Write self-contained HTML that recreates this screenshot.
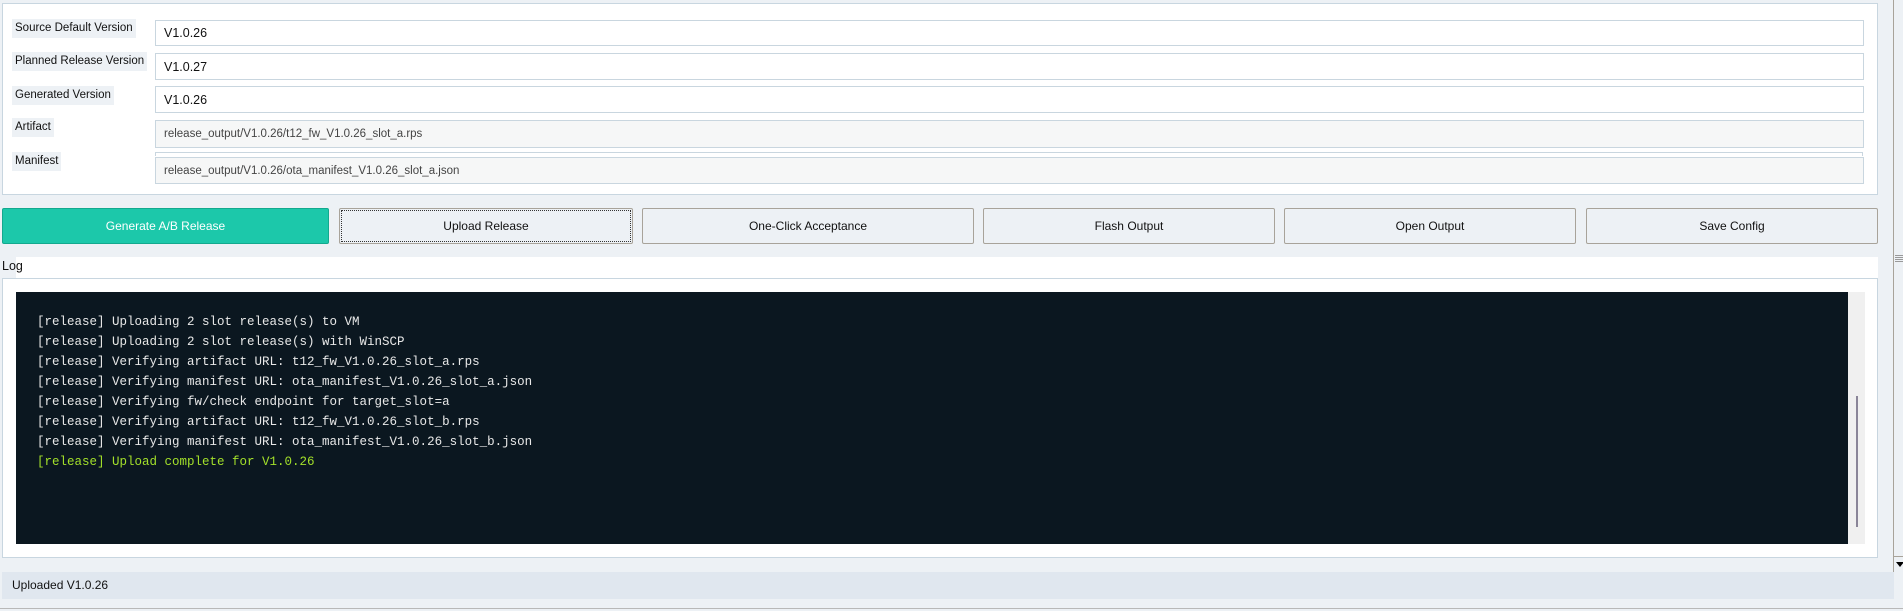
<!DOCTYPE html>
<html><head><meta charset="utf-8"><style>
*{margin:0;padding:0;box-sizing:border-box}
body{width:1903px;height:611px;background:#edf1f5;font-family:"Liberation Sans",sans-serif;position:relative;overflow:hidden;font-size:12px;color:#111}
.a{position:absolute}
.lbl{position:absolute;left:12px;height:19px;line-height:19px;background:#edf1f5;padding:0 3px;font-size:11.5px}
.inp{position:absolute;left:155px;width:1709px;background:#fff;border:1px solid #c9d6df;padding-left:8px;font-size:12.5px}
.ro{background:#f6f7f7;color:#444;font-size:11.5px}
.btn{position:absolute;top:208px;height:36px;background:#edf1f5;border:1px solid #a8a39a;text-align:center;line-height:34px;font-size:12px;border-radius:2px}
.log{font-family:"Liberation Mono",monospace;font-size:12.5px;color:#e8e8e8;position:absolute;left:37px;line-height:20px;white-space:pre}
</style></head><body>
<div class="a" style="left:2px;top:3px;width:1876px;height:192px;background:#fff;border:1px solid #c8d6e0"></div>
<div class="lbl" style="top:19px">Source Default Version</div>
<div class="lbl" style="top:52px">Planned Release Version</div>
<div class="lbl" style="top:86px">Generated Version</div>
<div class="lbl" style="top:118px">Artifact</div>
<div class="lbl" style="top:152px">Manifest</div>
<div class="inp" style="top:20px;height:26px;line-height:24px">V1.0.26</div>
<div class="inp" style="top:53px;height:27px;line-height:27px">V1.0.27</div>
<div class="inp" style="top:86px;height:27px;line-height:27px">V1.0.26</div>
<div class="inp ro" style="top:120px;height:28px;line-height:26px">release_output/V1.0.26/t12_fw_V1.0.26_slot_a.rps</div>
<div class="a" style="left:155px;top:152px;width:1708px;height:4px;border:1px solid #c9d6df;border-bottom:none"></div>
<div class="inp ro" style="top:157px;height:27px;line-height:26px">release_output/V1.0.26/ota_manifest_V1.0.26_slot_a.json</div>
<div class="btn" style="left:2px;width:327px;background:#1cc8aa;border-color:#13a98e;color:#fff">Generate A/B Release</div>
<div class="btn" style="left:339px;width:294px;outline:1px dotted #333;outline-offset:-3px">Upload Release</div>
<div class="btn" style="left:642px;width:332px">One-Click Acceptance</div>
<div class="btn" style="left:983px;width:292px">Flash Output</div>
<div class="btn" style="left:1284px;width:292px">Open Output</div>
<div class="btn" style="left:1586px;width:292px">Save Config</div>
<div class="a" style="left:16px;top:257px;width:1862px;height:21px;background:#fff"></div>
<div class="a" style="left:2px;top:259px;font-size:12.5px">Log</div>
<div class="a" style="left:2px;top:278px;width:1876px;height:280px;background:#fff;border:1px solid #c8d6e0"></div>
<div class="a" style="left:16px;top:292px;width:1832px;height:252px;background:#0b1720"></div>
<div class="a" style="left:1848px;top:292px;width:17px;height:252px;background:#f0f0f0"></div>
<div class="a" style="left:1856px;top:396px;width:2px;height:131px;background:#8a8598"></div>
<div class="log" style="top:312px">[release] Uploading 2 slot release(s) to VM
[release] Uploading 2 slot release(s) with WinSCP
[release] Verifying artifact URL: t12_fw_V1.0.26_slot_a.rps
[release] Verifying manifest URL: ota_manifest_V1.0.26_slot_a.json
[release] Verifying fw/check endpoint for target_slot=a
[release] Verifying artifact URL: t12_fw_V1.0.26_slot_b.rps
[release] Verifying manifest URL: ota_manifest_V1.0.26_slot_b.json
<span style="color:#a3e02a">[release] Upload complete for V1.0.26</span></div>
<div class="a" style="left:2px;top:572px;width:1892px;height:27px;background:#e0e7ef;line-height:27px;padding-left:10px;font-size:12px">Uploaded V1.0.26</div>
<div class="a" style="left:0;top:608px;width:1903px;height:1px;background:#b8b8b8"></div>
<div class="a" style="left:1893px;top:0;width:1px;height:572px;background:#a8a39a"></div>
<div class="a" style="left:1895px;top:255px;width:8px;height:1px;background:#999;box-shadow:0 2px #999,0 4px #999,0 6px #999"></div>
<div class="a" style="left:1893px;top:556px;width:10px;height:1px;background:#a8a39a"></div>
<div class="a" style="left:1896px;top:562px;width:0;height:0;border-left:4px solid transparent;border-right:4px solid transparent;border-top:5px solid #000"></div>
</body></html>
